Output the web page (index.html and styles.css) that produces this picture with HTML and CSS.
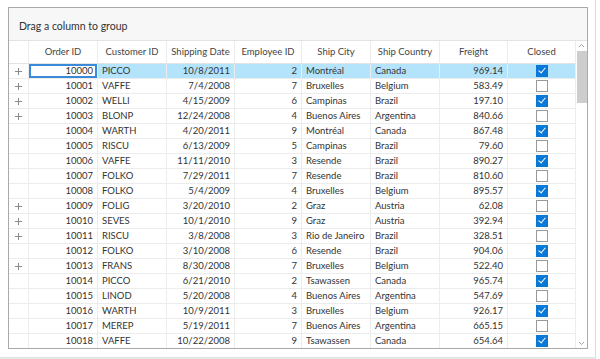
FILE: index.html
```html
<!DOCTYPE html>
<html>
  <head>
    <title>Orders grid</title>
    <link rel="stylesheet" href="styles.css">
  </head>
  <body>
    <div class="window">
      <div class="grid">
        <div class="group-panel">Drag a column to group</div>

        <div class="grid-main">
          <div class="grid-table">
            <div class="row header">
              <div class="cell ind"></div>
              <div class="cell">Order ID</div>
              <div class="cell">Customer ID</div>
              <div class="cell">Shipping Date</div>
              <div class="cell">Employee ID</div>
              <div class="cell">Ship City</div>
              <div class="cell">Ship Country</div>
              <div class="cell">Freight</div>
              <div class="cell">Closed</div>
            </div>

            <div class="rows">
              <div class="row selected">
                <div class="cell ind"><span class="plus"></span></div>
                <div class="cell num current">10000</div>
                <div class="cell">PICCO</div>
                <div class="cell num">10/8/2011</div>
                <div class="cell num">2</div>
                <div class="cell">Montréal</div>
                <div class="cell">Canada</div>
                <div class="cell num">969.14</div>
                <div class="cell center"><span class="check on"></span></div>
              </div>
              <div class="row">
                <div class="cell ind"><span class="plus"></span></div>
                <div class="cell num">10001</div>
                <div class="cell">VAFFE</div>
                <div class="cell num">7/4/2008</div>
                <div class="cell num">7</div>
                <div class="cell">Bruxelles</div>
                <div class="cell">Belgium</div>
                <div class="cell num">583.49</div>
                <div class="cell center"><span class="check"></span></div>
              </div>
              <div class="row">
                <div class="cell ind"><span class="plus"></span></div>
                <div class="cell num">10002</div>
                <div class="cell">WELLI</div>
                <div class="cell num">4/15/2009</div>
                <div class="cell num">6</div>
                <div class="cell">Campinas</div>
                <div class="cell">Brazil</div>
                <div class="cell num">197.10</div>
                <div class="cell center"><span class="check on"></span></div>
              </div>
              <div class="row">
                <div class="cell ind"><span class="plus"></span></div>
                <div class="cell num">10003</div>
                <div class="cell">BLONP</div>
                <div class="cell num">12/24/2008</div>
                <div class="cell num">4</div>
                <div class="cell">Buenos Aires</div>
                <div class="cell">Argentina</div>
                <div class="cell num">840.66</div>
                <div class="cell center"><span class="check"></span></div>
              </div>
              <div class="row">
                <div class="cell ind"></div>
                <div class="cell num">10004</div>
                <div class="cell">WARTH</div>
                <div class="cell num">4/20/2011</div>
                <div class="cell num">9</div>
                <div class="cell">Montréal</div>
                <div class="cell">Canada</div>
                <div class="cell num">867.48</div>
                <div class="cell center"><span class="check on"></span></div>
              </div>
              <div class="row">
                <div class="cell ind"></div>
                <div class="cell num">10005</div>
                <div class="cell">RISCU</div>
                <div class="cell num">6/13/2009</div>
                <div class="cell num">5</div>
                <div class="cell">Campinas</div>
                <div class="cell">Brazil</div>
                <div class="cell num">79.60</div>
                <div class="cell center"><span class="check"></span></div>
              </div>
              <div class="row">
                <div class="cell ind"></div>
                <div class="cell num">10006</div>
                <div class="cell">VAFFE</div>
                <div class="cell num">11/11/2010</div>
                <div class="cell num">3</div>
                <div class="cell">Resende</div>
                <div class="cell">Brazil</div>
                <div class="cell num">890.27</div>
                <div class="cell center"><span class="check on"></span></div>
              </div>
              <div class="row">
                <div class="cell ind"></div>
                <div class="cell num">10007</div>
                <div class="cell">FOLKO</div>
                <div class="cell num">7/29/2011</div>
                <div class="cell num">7</div>
                <div class="cell">Resende</div>
                <div class="cell">Brazil</div>
                <div class="cell num">810.60</div>
                <div class="cell center"><span class="check"></span></div>
              </div>
              <div class="row">
                <div class="cell ind"></div>
                <div class="cell num">10008</div>
                <div class="cell">FOLKO</div>
                <div class="cell num">5/4/2009</div>
                <div class="cell num">4</div>
                <div class="cell">Bruxelles</div>
                <div class="cell">Belgium</div>
                <div class="cell num">895.57</div>
                <div class="cell center"><span class="check on"></span></div>
              </div>
              <div class="row">
                <div class="cell ind"><span class="plus"></span></div>
                <div class="cell num">10009</div>
                <div class="cell">FOLIG</div>
                <div class="cell num">3/20/2010</div>
                <div class="cell num">2</div>
                <div class="cell">Graz</div>
                <div class="cell">Austria</div>
                <div class="cell num">62.08</div>
                <div class="cell center"><span class="check"></span></div>
              </div>
              <div class="row">
                <div class="cell ind"><span class="plus"></span></div>
                <div class="cell num">10010</div>
                <div class="cell">SEVES</div>
                <div class="cell num">10/1/2010</div>
                <div class="cell num">9</div>
                <div class="cell">Graz</div>
                <div class="cell">Austria</div>
                <div class="cell num">392.94</div>
                <div class="cell center"><span class="check on"></span></div>
              </div>
              <div class="row">
                <div class="cell ind"><span class="plus"></span></div>
                <div class="cell num">10011</div>
                <div class="cell">RISCU</div>
                <div class="cell num">3/8/2008</div>
                <div class="cell num">3</div>
                <div class="cell">Rio de Janeiro</div>
                <div class="cell">Brazil</div>
                <div class="cell num">328.51</div>
                <div class="cell center"><span class="check"></span></div>
              </div>
              <div class="row">
                <div class="cell ind"></div>
                <div class="cell num">10012</div>
                <div class="cell">FOLKO</div>
                <div class="cell num">3/10/2008</div>
                <div class="cell num">6</div>
                <div class="cell">Resende</div>
                <div class="cell">Brazil</div>
                <div class="cell num">904.06</div>
                <div class="cell center"><span class="check on"></span></div>
              </div>
              <div class="row">
                <div class="cell ind"><span class="plus"></span></div>
                <div class="cell num">10013</div>
                <div class="cell">FRANS</div>
                <div class="cell num">8/30/2008</div>
                <div class="cell num">7</div>
                <div class="cell">Bruxelles</div>
                <div class="cell">Belgium</div>
                <div class="cell num">522.40</div>
                <div class="cell center"><span class="check"></span></div>
              </div>
              <div class="row">
                <div class="cell ind"></div>
                <div class="cell num">10014</div>
                <div class="cell">PICCO</div>
                <div class="cell num">6/21/2010</div>
                <div class="cell num">2</div>
                <div class="cell">Tsawassen</div>
                <div class="cell">Canada</div>
                <div class="cell num">965.74</div>
                <div class="cell center"><span class="check on"></span></div>
              </div>
              <div class="row">
                <div class="cell ind"></div>
                <div class="cell num">10015</div>
                <div class="cell">LINOD</div>
                <div class="cell num">5/20/2008</div>
                <div class="cell num">4</div>
                <div class="cell">Buenos Aires</div>
                <div class="cell">Argentina</div>
                <div class="cell num">547.69</div>
                <div class="cell center"><span class="check"></span></div>
              </div>
              <div class="row">
                <div class="cell ind"></div>
                <div class="cell num">10016</div>
                <div class="cell">WARTH</div>
                <div class="cell num">10/9/2011</div>
                <div class="cell num">3</div>
                <div class="cell">Bruxelles</div>
                <div class="cell">Belgium</div>
                <div class="cell num">926.17</div>
                <div class="cell center"><span class="check on"></span></div>
              </div>
              <div class="row">
                <div class="cell ind"></div>
                <div class="cell num">10017</div>
                <div class="cell">MEREP</div>
                <div class="cell num">5/19/2011</div>
                <div class="cell num">7</div>
                <div class="cell">Buenos Aires</div>
                <div class="cell">Argentina</div>
                <div class="cell num">665.15</div>
                <div class="cell center"><span class="check"></span></div>
              </div>
              <div class="row">
                <div class="cell ind"></div>
                <div class="cell num">10018</div>
                <div class="cell">VAFFE</div>
                <div class="cell num">10/22/2008</div>
                <div class="cell num">9</div>
                <div class="cell">Tsawassen</div>
                <div class="cell">Canada</div>
                <div class="cell num">654.64</div>
                <div class="cell center"><span class="check on"></span></div>
              </div>
            </div>
          </div>

          <div class="scrollbar">
            <svg class="arrow" width="11" height="10" viewBox="0 0 11 10">
              <path d="M3 6 L5.5 3.5 L8 6" fill="none" stroke="#a0a0a0" stroke-width="1"/>
            </svg>
            <div class="thumb"></div>
            <div class="track"></div>
            <svg class="arrow" width="11" height="10" viewBox="0 0 11 10">
              <path d="M3 4 L5.5 6.5 L8 4" fill="none" stroke="#a0a0a0" stroke-width="1"/>
            </svg>
          </div>
        </div>
      </div>
    </div>
  </body>
</html>
```

FILE: styles.css
```css
body {
  margin: 0;
  background-color: white;
  font-family: Lato, "Open Sans", sans-serif;
  color: #333333;
}

.window {
  width: 587px;
  height: 350px;
  padding: 7px 0 0 8px;
  border-right: 1px solid #dcdcdc;
  border-bottom: 2px solid #e6e6e6;
}

.grid {
  width: 578px;
  height: 340px;
  border: 1px solid #a9a9a9;
  display: flex;
  flex-direction: column;
  overflow: hidden;
}

.group-panel {
  height: 33px;
  flex-shrink: 0;
  box-sizing: border-box;
  padding: 12px 0 0 10px;
  font-size: 10.5px;
  background-color: #f7f7f7;
  border-bottom: 1px solid #e3e3e3;
}

.grid-main {
  flex: 1;
  display: flex;
  min-height: 0;
}

.grid-table {
  width: 567px;
  display: flex;
  flex-direction: column;
  overflow: hidden;
}

.row {
  display: grid;
  grid-template-columns: 20px 69px 69px 68px 67px 69px 69px 68px 68px;
  height: 15px;
  font-size: 9.5px;
}

.cell {
  box-sizing: border-box;
  border-right: 1px solid #ececec;
  border-bottom: 1px solid #ececec;
  padding: 0 4px;
  line-height: 14px;
  white-space: nowrap;
  overflow: hidden;
}

.header {
  height: 23px;
  font-size: 9.5px;
  color: #444444;
}

.header .cell {
  text-align: center;
  line-height: 22px;
  border-bottom: 1px solid #e3e3e3;
}

.num {
  text-align: right;
}

.center {
  display: flex;
  align-items: center;
  justify-content: center;
}

.ind {
  display: flex;
  align-items: center;
  justify-content: center;
  padding: 0;
}

.plus {
  width: 7px;
  height: 7px;
  position: relative;
}

.plus::before,
.plus::after {
  content: "";
  position: absolute;
  background-color: #8a8a8a;
}

.plus::before {
  left: 0;
  top: 3px;
  width: 7px;
  height: 1px;
}

.plus::after {
  left: 3px;
  top: 0;
  width: 1px;
  height: 7px;
}

.selected .cell:not(.ind) {
  background-color: #b3e4fb;
}

.selected .current {
  background-color: white !important;
  box-shadow: inset 0 0 0 2px #3a8ad8;
}

.check {
  width: 10px;
  height: 10px;
  border: 1px solid #9a9a9a;
  background-color: white;
  position: relative;
}

.check.on {
  background-color: #0a78d7;
  border-color: #0a78d7;
}

.check.on::after {
  content: "";
  position: absolute;
  left: 3px;
  top: 0px;
  width: 3px;
  height: 6px;
  border-right: 1.5px solid white;
  border-bottom: 1.5px solid white;
  transform: rotate(40deg);
}

.scrollbar {
  width: 11px;
  display: flex;
  flex-direction: column;
  align-items: center;
  background-color: white;
}

.arrow {
  flex-shrink: 0;
}

.thumb {
  width: 10px;
  height: 52px;
  background-color: #cdcdcd;
}

.track {
  flex: 1;
}
```
